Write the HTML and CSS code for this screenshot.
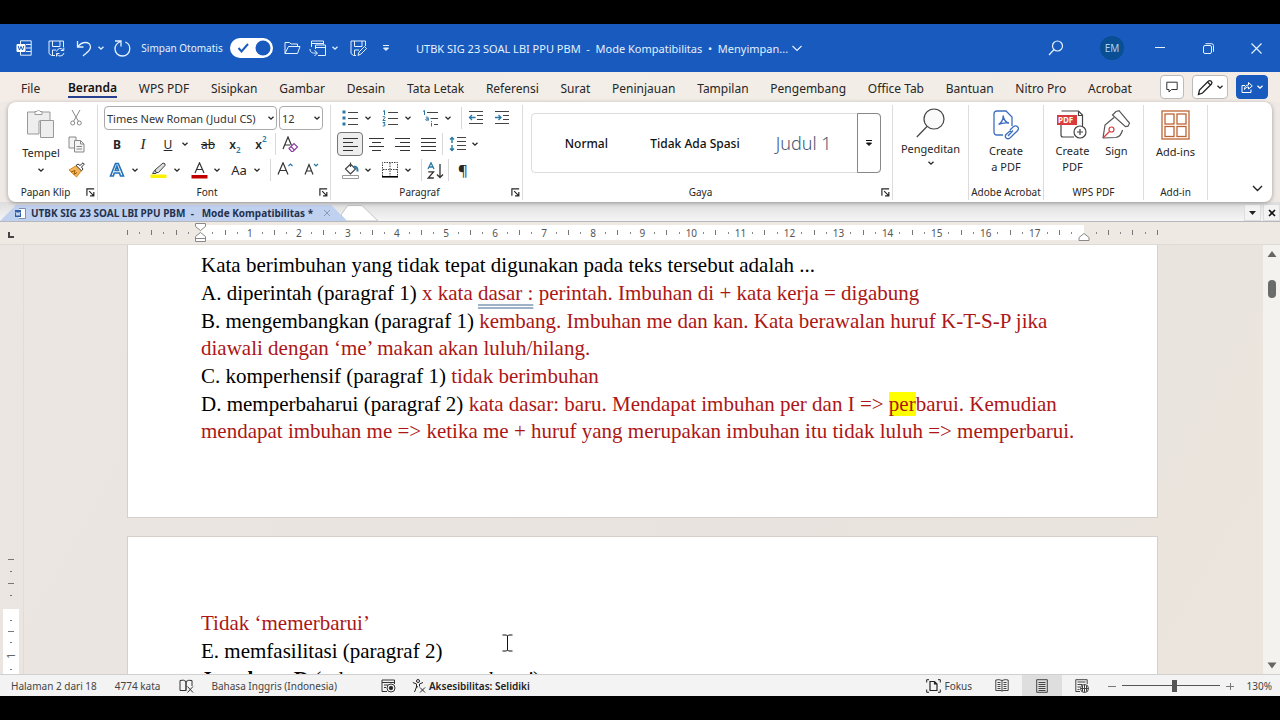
FILE: index.html
```html
<!DOCTYPE html>
<html lang="id">
<head>
<meta charset="utf-8">
<title>UTBK SIG 23 SOAL LBI PPU PBM</title>
<link rel="stylesheet" href="styles.css">
</head>
<body>
<svg class="defs" aria-hidden="true">
  <symbol id="chev" viewBox="0 0 8 8"><path d="M1.500 2.700 4 5.200 6.500 2.700" fill="none" stroke="currentColor" stroke-width="1.300"/></symbol>
  <symbol id="launch" viewBox="0 0 10 10"><path d="M1 8.500V1h8M3.500 3.500l5 5M8.700 4.500v4.200H4.500" fill="none" stroke="currentColor" stroke-width="1.300"/></symbol>
  <symbol id="more" viewBox="0 0 8 8"><path d="M1 1.500h6M1.500 4 4 6.500 6.500 4z" fill="currentColor" stroke="currentColor"/></symbol>
</svg>
<div class="app">
  <header class="titlebar">
    <div class="quick">
      <button class="c32" aria-label="Word"><svg width="16" height="16" viewBox="0 0 16 16" fill="none" stroke="currentColor"><path d="M4.500 4V.8h10.700v14.400H4.500V12M10 4.500h5M10 8h5M10 11.500h5"/><rect x=".5" y="4" width="9" height="8" rx="1" fill="#fff" stroke="none"/><path d="m2.200 6 1.300 4L5 6.500 6.500 10 7.800 6" stroke="#185abd"/></svg></button>
      <button class="c32" aria-label="Simpan"><svg width="17" height="17" viewBox="0 0 17 17" fill="none" stroke="currentColor"><path d="M7 15.500H3.500l-2.500-2V1h14.500v6M4.500 1v5.500h7.500V1M4.500 15v-5H8M8.500 11.500a4 4 0 0 1 7-1.500M15.800 7.500v3h-3M16 13a4 4 0 0 1-7 1.500M8.500 16.500v-3h3"/></svg></button>
      <span class="split"><button class="c24" aria-label="Urungkan"><svg width="16" height="17" viewBox="0 0 16 17" fill="none" stroke="currentColor" stroke-width="1.300"><path d="M1.500 1v6h6M1.800 6.700C4 4 6.500 2.500 9.500 2.500c3 0 5 2 5 4.500 0 3.500-3.500 5.500-7.500 9"/></svg></button><button class="c10" aria-label="Opsi urungkan"><svg width="8" height="8"><use href="#chev"/></svg></button></span>
      <button class="c24" aria-label="Ulangi"><svg width="17" height="17" viewBox="0 0 17 17" fill="none" stroke="currentColor" stroke-width="1.300"><path d="M1 1h6v5.500M6.500 1.500C3 3 1 5.500 1 9c0 4 3.300 7 7.300 7 4.200 0 7.500-3 7.500-7.200 0-3.300-2-5.800-4.500-6.800"/></svg></button>
      <label class="auto" for="autosave">Simpan Otomatis</label>
      <span class="switch"><input type="checkbox" id="autosave" checked><svg width="43" height="20" viewBox="0 0 43 20" fill="none"><circle cx="33" cy="10" r="7.500" fill="#185abd"/><path d="m8.500 10 3 3.500L18 6" stroke="#185abd" stroke-width="2"/></svg></span>
      <button class="c24" aria-label="Buka"><svg width="17" height="14" viewBox="0 0 17 14" fill="none" stroke="currentColor"><path d="M1 12.500V1.500h4.500L7 3h6.500v2.500M1 12.500l3.500-7H16l-2.500 7z"/></svg></button>
      <span class="split"><button class="c26" aria-label="Salin ke"><svg width="17" height="17" viewBox="0 0 17 17" fill="none" stroke="currentColor"><path d="M2.500 7V1h12v3.500M2.500 3.500h12M6.500 9v-4h10v10.500H9M6.500 7.500h10M1 9c0 3 1.500 4.500 7 4M5.500 10.500 8.500 13l-3 3"/></svg></button><button class="c10" aria-label="Opsi salin"><svg width="8" height="8"><use href="#chev"/></svg></button></span>
      <button class="c28" aria-label="Simpan sebagai"><svg width="17" height="17" viewBox="0 0 17 17" fill="none" stroke="currentColor"><path d="M6 15.500H3.500l-2.500-2V1h14.500v5M4.500 1v5.500h7.500V1M4.500 15v-5H9M8 15.500l1-3.500 5.500-5.500 2 2-5.500 5.500z"/></svg></button>
      <button class="c28" aria-label="Kustomisasi"><svg width="8" height="8"><use href="#more"/></svg></button>
    </div>
    <div class="doc-title">UTBK SIG 23 SOAL LBI PPU PBM &nbsp;- &nbsp;Mode Kompatibilitas &nbsp;•&nbsp; Menyimpan...<svg width="12" height="12" viewBox="0 0 12 12"><path d="m1.500 4 4.500 4.500L10.500 4" fill="none" stroke="currentColor" stroke-width="1.200"/></svg></div>
    <div class="window-tools">
      <button aria-label="Cari"><svg width="16" height="16" viewBox="0 0 16 16" fill="none" stroke="currentColor" stroke-width="1.200"><circle cx="9.500" cy="6" r="5"/><path d="m6 9.500-5 5.500"/></svg></button>
      <button class="avatar">EM</button>
      <button aria-label="Minimalkan"><svg width="10" height="10"><path d="M0 4.500h10" stroke="currentColor"/></svg></button>
      <button aria-label="Pulihkan"><svg width="11" height="11" viewBox="0 0 11 11" fill="none" stroke="currentColor"><rect x=".5" y="2.500" width="8" height="8" rx="1.500"/><path d="M2.500.7h6q2 0 2 2v6"/></svg></button>
      <button aria-label="Tutup"><svg width="11" height="11" viewBox="0 0 11 11"><path d="m.5.5 10 10m0-10-10 10" stroke="currentColor" stroke-width="1.200"/></svg></button>
    </div>
  </header>

  <div class="menu-row">
    <nav class="menu">
      <button class="file">File</button><button class="active">Beranda</button><button>WPS PDF</button><button>Sisipkan</button><button>Gambar</button><button>Desain</button><button>Tata Letak</button><button>Referensi</button><button>Surat</button><button>Peninjauan</button><button>Tampilan</button><button>Pengembang</button><button>Office Tab</button><button>Bantuan</button><button>Nitro Pro</button><button>Acrobat</button>
    </nav>
    <div class="menu-actions">
      <button class="boxed" aria-label="Komentar"><svg width="12" height="12" viewBox="0 0 12 12" fill="none" stroke="#333"><path d="M.8 1.200h10.400v7.300H5.500L3 11V8.500H.8z"/></svg></button>
      <button class="boxed wide" aria-label="Pengeditan"><svg width="17" height="17" viewBox="0 0 17 17" fill="none" stroke="#222" stroke-width="1.300"><path d="m1.500 15.500 1-4.500 9-9q1.300-1 2.700.3t.3 2.700l-9 9zM10.500 3l3.300 3.300"/></svg><svg width="8" height="8"><use href="#chev"/></svg></button>
      <button class="boxed share" aria-label="Bagikan"><svg width="12" height="12" viewBox="0 0 12 12" fill="none" stroke="#fff"><path d="M4 4.500H1v7h9V8.500M3.500 8.500c0-3 1.500-4.500 4-4.500V1.500L11.300 5 7.500 8V6c-2 0-3 .8-4 2.500z"/></svg><svg width="8" height="8"><use href="#chev"/></svg></button>
    </div>
  </div>

  <section class="ribbon">
    <div class="group clip">
      <div class="body">
        <button class="big"><svg width="30" height="32" viewBox="0 0 30 32" fill="#eee" stroke="#999"><path d="M9 4H1.500v22H13V13h11V4h-8"/><path d="M9 6.500V3.500h2q1.500-3 3 0h2v3z" fill="#fff"/><path d="M14.500 12.500h13v17h-13z"/></svg><span>Tempel</span><svg width="8" height="8"><use href="#chev"/></svg></button>
        <div class="stack">
          <button aria-label="Potong"><svg width="12" height="16" viewBox="0 0 12 16" fill="none" stroke="#888"><path d="m2 0 6.500 11.500M10 0 3.500 11.500"/><circle cx="2.700" cy="13" r="2"/><circle cx="9.300" cy="13" r="2"/></svg></button>
          <button aria-label="Salin"><svg width="17" height="17" viewBox="0 0 17 17" fill="#f4f4f4" stroke="#888"><path d="M6 12H1V1h7v3"/><path d="M6.500 4.500h6l3.500 3.500v8H6.500zM12.500 4.500V8H16M8.500 10.500H14M8.500 13H14"/></svg></button>
          <button aria-label="Pemformat"><svg width="17" height="16" viewBox="0 0 17 16"><path d="m8.500 3.500 5 5-5 6.500L1 8z" fill="#f5b55c" stroke="#d68920"/><path d="m3 10 4-1.500-1 4 3-2" stroke="#9a5b00" fill="none"/><path d="m8 3.500 2-1.500 2 1.500L15 .8l1.300 1.300-2.800 3L15 7l-1.500 1.800z" fill="#fff" stroke="#333"/></svg></button>
        </div>
      </div>
      <div class="caption"><span>Papan Klip</span><button aria-label="Opsi papan klip"><svg width="9" height="9"><use href="#launch"/></svg></button></div>
    </div>

    <div class="group font">
      <div class="rows">
        <div class="row selects">
          <span class="pick family"><select aria-label="Font"><option>Times New Roman (Judul CS)</option></select><svg width="8" height="8"><use href="#chev"/></svg></span>
          <span class="pick size"><select aria-label="Ukuran font"><option>12</option></select><svg width="8" height="8"><use href="#chev"/></svg></span>
        </div>
        <div class="row">
          <button class="c26 bold">B</button><button class="c26 ital">I</button><span class="split"><button class="c24 under">U</button><button class="c10" aria-label="Opsi garis bawah"><svg width="8" height="8"><use href="#chev"/></svg></button></span><button class="c28 strike">ab</button><button class="c26 semi">x<sub>2</sub></button><button class="c26 semi">x<sup>2</sup></button><i class="sep"></i>
          <button class="c26" aria-label="Hapus format"><svg width="17" height="17" viewBox="0 0 17 17" fill="none" stroke="#333" stroke-width="1.200"><path d="M1 13 6 1l3.500 8.500M3 9h5"/><path d="m7 12.500 5-5 3.500 3.500-4.500 4.500H9.500zM9 10.500l3.800 3.800" stroke="#8b3fa0"/></svg></button>
        </div>
        <div class="row">
          <span class="split"><button class="c26" aria-label="Efek teks"><svg width="16" height="16" viewBox="0 0 16 16"><path d="M1.500 14 6.500 1.500h2.800L14.500 14h-3l-1-3H5.300l-1 3zM6.200 8.500h3.300L7.900 4z" fill="#fff" stroke="#2472b8" stroke-width="1.600"/></svg></button><button class="c10" aria-label="Opsi efek"><svg width="8" height="8"><use href="#chev"/></svg></button></span>
          <span class="split"><button class="c28" aria-label="Warna sorotan"><svg width="17" height="17" viewBox="0 0 17 17"><path d="M.5 12.500h16V16H.5z" fill="#fff200"/><path d="m5 8 8-7q3 .5 2 2.500l-6.500 7H6zM5 8l-2.500 3.500H6l.8-1" fill="#ddd" stroke="#444"/></svg></button><button class="c10" aria-label="Opsi sorotan"><svg width="8" height="8"><use href="#chev"/></svg></button></span>
          <span class="split"><button class="c26" aria-label="Warna font"><svg width="17" height="17" viewBox="0 0 17 17"><path d="M.5 13h16v3.500H.5z" fill="#c00000"/><path d="M4 11 8.500.8 13 11M5.500 7.500h6" fill="none" stroke="#333" stroke-width="1.200"/></svg></button><button class="c10" aria-label="Opsi warna"><svg width="8" height="8"><use href="#chev"/></svg></button></span>
          <span class="split"><button class="c26 case">Aa</button><button class="c10" aria-label="Opsi huruf"><svg width="8" height="8"><use href="#chev"/></svg></button></span><i class="sep"></i>
          <button class="c26" aria-label="Perbesar font"><svg width="17" height="16" viewBox="0 0 17 16" fill="none" stroke="#333" stroke-width="1.200"><path d="M1 12.500 6 .8l5 11.700M2.800 8.500h6.400"/><path d="m11.500 4 2-2 2 2" stroke="#2878a8"/></svg></button>
          <button class="c26" aria-label="Perkecil font"><svg width="17" height="16" viewBox="0 0 17 16" fill="none" stroke="#333" stroke-width="1.200"><path d="M2 12.500 6 2.500l4 10M3.500 9h5"/><path d="m11 2 2 2 2-2" stroke="#2878a8"/></svg></button>
        </div>
      </div>
      <div class="caption"><span>Font</span><button aria-label="Opsi font"><svg width="9" height="9"><use href="#launch"/></svg></button></div>
    </div>

    <div class="group para">
      <div class="rows">
        <div class="row">
          <span class="split"><button class="c26" aria-label="Poin"><svg width="17" height="16" viewBox="0 0 17 16"><path d="M.5.5h3v3h-3zM.5 6.500h3v3h-3zM.5 12.500h3v3h-3z" fill="#2878a8"/><path d="M6 2.500h10M6 8.500h10M6 14.500h10" stroke="#444"/></svg></button><button class="c10" aria-label="Opsi poin"><svg width="8" height="8"><use href="#chev"/></svg></button></span>
          <span class="split"><button class="c26" aria-label="Penomoran"><svg width="17" height="17" viewBox="0 0 17 17" fill="none"><path d="M6 2.500h10M6 8.500h10M6 14.500h10" stroke="#444"/><path d="M1 1.500 2.500.5V5M.7 6.800q2.600-1 2.300.7L.8 10.500H3.500M.7 12.500H3L1.800 14q2 0 1.200 1.500-.8 1-2.300.3" stroke="#2878a8"/></svg></button><button class="c10" aria-label="Opsi penomoran"><svg width="8" height="8"><use href="#chev"/></svg></button></span>
          <span class="split"><button class="c26" aria-label="Daftar bertingkat"><svg width="17" height="17" viewBox="0 0 17 17" fill="none"><path d="M5 2.500h11M8.500 8.500H16M12 14.500h4" stroke="#444"/><path d="M1 1.500 2.500.5V5M3.800 7.200q2.500-.8 2.500 1v2.500M6.300 8.700q-2.800-.3-2.600 1.200.8 1.200 2.600-.3M9.500 12.800v3.700M9.500 11v1" stroke="#2878a8"/></svg></button><button class="c10" aria-label="Opsi bertingkat"><svg width="8" height="8"><use href="#chev"/></svg></button></span><i class="sep"></i>
          <button class="c26" aria-label="Kurangi indentasi"><svg width="16" height="16" viewBox="0 0 16 16" fill="none" stroke="#444"><path d="M1 1.500h14M9 5.500h6M9 9.500h6M1 13.500h14"/><path d="M7.500 7.500H1.500M4 5 1.500 7.500 4 10" stroke="#2878a8" stroke-width="1.300"/></svg></button>
          <button class="c26" aria-label="Tambah indentasi"><svg width="16" height="16" viewBox="0 0 16 16" fill="none" stroke="#444"><path d="M1 1.500h14M9 5.500h6M9 9.500h6M1 13.500h14"/><path d="M1 7.500h6M4.500 5 7 7.500 4.500 10" stroke="#2878a8" stroke-width="1.300"/></svg></button>
        </div>
        <div class="row">
          <button class="c26 pressed" aria-label="Rata kiri"><svg width="15" height="15" stroke="#333"><path d="M0 1.500h15M0 5.500h10M0 9.500h15M0 13.500h10"/></svg></button>
          <button class="c26" aria-label="Rata tengah"><svg width="15" height="15" stroke="#333"><path d="M0 1.500h15M3 5.500h9M0 9.500h15M3 13.500h9"/></svg></button>
          <button class="c26" aria-label="Rata kanan"><svg width="15" height="15" stroke="#333"><path d="M0 1.500h15M5 5.500h10M0 9.500h15M5 13.500h10"/></svg></button>
          <button class="c26" aria-label="Rata penuh"><svg width="15" height="15" stroke="#333"><path d="M0 1.500h15M0 5.500h15M0 9.500h15M0 13.500h15"/></svg></button><i class="sep"></i>
          <span class="split"><button class="c26" aria-label="Spasi baris"><svg width="17" height="16" viewBox="0 0 17 16" fill="none" stroke="#444"><path d="M8 1.500h9M8 5.500h9M8 9.500h9M8 13.500h9"/><path d="M3 1.500V7M1 3.500l2-2 2 2M3 9v5.500M1 12.500l2 2 2-2" stroke="#2878a8" stroke-width="1.400"/></svg></button><button class="c10" aria-label="Opsi spasi"><svg width="8" height="8"><use href="#chev"/></svg></button></span>
        </div>
        <div class="row">
          <span class="split"><button class="c26" aria-label="Bayangan"><svg width="17" height="17" viewBox="0 0 17 17" fill="none" stroke="#444"><path d="M.5 13.500h16v3H.5z" stroke="#999"/><path d="m3.500 7 5-5 5 5-5 5zM8.500 5V.5" stroke-width="1.200"/><path d="M12 4.500q4 0 3.500 5" stroke="#2878a8" stroke-width="2"/></svg></button><button class="c10" aria-label="Opsi bayangan"><svg width="8" height="8"><use href="#chev"/></svg></button></span>
          <span class="split"><button class="c26" aria-label="Batas"><svg width="16" height="16" viewBox="0 0 16 16" fill="none" stroke="#444"><path d="M.5 14V.5h15V14M8 1v13M1 7.500h14" stroke-dasharray="1.500 1"/><path d="M0 14.800h16" stroke="#000" stroke-width="1.600"/></svg></button><button class="c10" aria-label="Opsi batas"><svg width="8" height="8"><use href="#chev"/></svg></button></span><i class="sep"></i>
          <button class="c24" aria-label="Urutkan"><svg width="17" height="17" viewBox="0 0 17 17" fill="none" stroke="#333" stroke-width="1.300"><path d="M1 7 4 .8 7 7M2 5h4" stroke="#2878a8"/><path d="M1.300 9.800H6.500L1.200 16h5.600M13 2v13.500M10 12.500l3 3 3-3"/></svg></button><i class="sep"></i>
          <button class="c26 pilcrow">¶</button>
        </div>
      </div>
      <div class="caption"><span>Paragraf</span><button aria-label="Opsi paragraf"><svg width="9" height="9"><use href="#launch"/></svg></button></div>
    </div>

    <div class="group styles">
      <div class="gallery">
        <button>Normal</button><button>Tidak Ada Spasi</button><button class="heading">Judul 1</button>
        <button class="expand" aria-label="Gaya lainnya"><svg width="8" height="8"><use href="#more"/></svg></button>
      </div>
      <div class="caption"><span>Gaya</span><button aria-label="Opsi gaya"><svg width="9" height="9"><use href="#launch"/></svg></button></div>
    </div>

    <div class="group edit">
      <button class="big"><svg width="30" height="31" viewBox="0 0 30 31" fill="#fafafa" stroke="#444" stroke-width="1.200"><circle cx="18" cy="11" r="10"/><path d="M11 18.500.8 29"/></svg><span>Pengeditan</span><svg width="8" height="8"><use href="#chev"/></svg></button>
    </div>

    <div class="group acro">
      <div class="body"><button class="big"><svg width="26" height="30" viewBox="0 0 26 30" fill="none" stroke="#3d6dc0" stroke-width="1.300"><path d="M10 25H4q-3 0-3-3V4q0-3 3-3h9l6 6v9M5.500 14.500C9 13 10.500 8 10 5.500c1 4.500 3 7.500 6 7.500-4-.5-7.500 0-10.500 1.500"/><path d="m17 20 3.500-3.500q2-1.500 4 .2t0 4L21 24M20 20.500 15 26M18.500 22l-1.500-1-4 3.500q-1.500 2 .2 3.500t3.800 0L21 24"/></svg><span>Create<br>a PDF</span></button></div>
      <div class="caption"><span>Adobe Acrobat</span></div>
    </div>

    <div class="group wps">
      <div class="body">
        <button class="big"><svg width="30" height="30" viewBox="0 0 30 30" fill="none" stroke="#444" stroke-width="1.200"><path d="M4.500 1h17l4 4v12M17 27H6q-2 0-2-2V14M21.500 1v4.500h4"/><rect x="0" y="5" width="20" height="10" fill="#d83b3b" stroke="none"/><text x="1" y="13" class="pdf">PDF</text><circle cx="23" cy="22" r="6" fill="#fff"/><path d="M23 19v6M20 22h6"/></svg><span>Create<br>PDF</span></button>
        <button class="big"><svg width="30" height="30" viewBox="0 0 30 30" fill="none" stroke="#555" stroke-width="1.200"><path d="M2 28 4 15l9-7.500M2 28l13-.5q5-1 6.500-7.500M15 1.500l3-.8 10.500 12.500-1.500 3-2.500.5L11.500 5z"/><circle cx="10.500" cy="19.500" r="2.500" stroke="#d83b3b"/><path d="m2 28 6.500-6.500" stroke="#d83b3b"/></svg><span>Sign</span></button>
      </div>
      <div class="caption"><span>WPS PDF</span></div>
    </div>

    <div class="group addin">
      <div class="body"><button class="big"><svg width="29" height="30" viewBox="0 0 29 30" fill="none" stroke="#bd6433" stroke-width="1.300"><rect x="1" y="1" width="27" height="28"/><rect x="4" y="4" width="9" height="10"/><rect x="16" y="4" width="9" height="10"/><rect x="4" y="16.500" width="9" height="10"/><rect x="16" y="16.500" width="9" height="10"/></svg><span>Add-ins</span></button></div>
      <div class="caption"><span>Add-in</span></div>
    </div>
    <div class="tail"><button aria-label="Ciutkan pita"><svg width="11" height="11" viewBox="0 0 11 11"><path d="m1 3 4.500 4.500L10 3" fill="none" stroke="#222" stroke-width="1.400"/></svg></button></div>
  </section>

  <div class="doc-tabs">
    <div class="doc-tab"><svg width="11" height="11" viewBox="0 0 11 11"><path d="M4 .5h6.500v10H4" fill="#fff" stroke="#7d90b4"/><path d="M0 2h6v7H0z" fill="#2f5da8"/><path d="m1 4 1 3.500 1-3 1 3L5 4" fill="none" stroke="#fff" stroke-width=".8"/></svg><span>UTBK SIG 23 SOAL LBI PPU PBM &nbsp;- &nbsp;&nbsp;Mode Kompatibilitas *</span><button aria-label="Tutup tab"><svg width="8" height="8"><path d="m1 1 6 6m0-6L1 7" stroke="#8798ba"/></svg></button></div>
    <button class="new-tab" aria-label="Tab baru"><svg width="38" height="16" viewBox="0 0 38 16"><path d="m0 10 6-8.500q1-1 2-1h11q2 0 3 1L37 16H5z" fill="#fff" stroke="#c5c5c5"/></svg></button>
    <div class="tab-tools"><button aria-label="Daftar tab"><svg width="7" height="4"><path d="M0 0h7L3.500 4z" fill="#222"/></svg></button><button aria-label="Tutup dokumen"><svg width="8" height="8"><path d="m1 1 6 6m0-6L1 7" stroke="#111" stroke-width="1.600"/></svg></button></div>
  </div>

  <div class="ruler">
    <div class="corner"><svg width="6" height="6"><path d="M1 0v5h5" fill="none" stroke="#444" stroke-width="2"/></svg></div>
    <div class="scale" id="scale"></div>
  </div>

  <main class="workspace">
    <div class="v-ruler"><div class="v-top"><i></i><b></b><i></i><b></b></div><div class="v-page"><b></b><i></i><b></b><span>1</span><b></b></div></div>
    <div class="pages">
      <article class="page first">
        <p>Kata berimbuhan yang tidak tepat digunakan pada teks tersebut adalah ...</p>
        <p>A. diperintah (paragraf 1) <span class="red">x kata <span class="flag">dasar :</span> perintah. Imbuhan di + kata kerja = digabung</span></p>
        <p>B. mengembangkan (paragraf 1) <span class="red">kembang. Imbuhan me dan kan. Kata berawalan huruf K-T-S-P jika diawali dengan ‘me’ makan akan luluh/hilang.</span></p>
        <p>C. komperhensif (paragraf 1) <span class="red">tidak berimbuhan</span></p>
        <p>D. memperbaharui (paragraf 2) <span class="red">kata dasar: baru. Mendapat imbuhan per dan I =&gt; <mark>per</mark>barui. Kemudian mendapat imbuhan me =&gt; ketika me + huruf yang merupakan imbuhan itu tidak luluh =&gt; memperbarui.</span></p>
      </article>
      <article class="page second">
        <p class="red">Tidak ‘memerbarui’</p>
        <p>E. memfasilitasi (paragraf 2)</p>
        <p><strong>Jawaban: D</strong> (seharusnya <em>memperbarui</em>)</p>
      </article>
      <svg class="caret" width="11" height="18" viewBox="0 0 11 18" fill="none" stroke="#111"><path d="M.5 1h4l1 1 1-1h4M5.500 2v14M.5 17h4l1-1 1 1h4"/></svg>
    </div>
    <div class="scrollbar"><svg width="10" height="7"><path d="M5 0 9.500 6h-9z" fill="#666"/></svg><div class="thumb"></div><svg class="down" width="10" height="7"><path d="M.5.500h9L5 6.500z" fill="#666"/></svg></div>
  </main>

  <footer class="status">
    <span>Halaman 2 dari 18</span><span class="words">4774 kata</span>
    <button class="proof" aria-label="Pemeriksaan"><svg width="15" height="14" viewBox="0 0 15 14" fill="none" stroke="#333"><path d="M7 2.500Q4.500.3 1 1.500v10h6zM7 2.500q2.500-2 6-1V7M7 11.500V2.500M8.500 7.500l5.500 6m0-6-5.500 6"/></svg></button>
    <span class="lang">Bahasa Inggris (Indonesia)</span>
    <button class="macro" aria-label="Makro"><svg width="15" height="14" viewBox="0 0 15 14" fill="none" stroke="#333"><path d="M6 12.500H1V1h12.500v4M1 3.500h12.500M3 6h4M3 8.500h2"/><circle cx="10" cy="9" r="4" fill="#fff"/><circle cx="10" cy="9" r="1.800" fill="#222"/></svg></button>
    <button class="access"><svg width="14" height="14" viewBox="0 0 14 14" fill="none" stroke="#222"><circle cx="6" cy="2" r="1.500"/><path d="M.8 3.500 4.500 5v3L2.500 13M11 3.500 7.500 5v2.500M4.500 8.500 6 7.500M8 8.500l5 5m0-5-5 5"/></svg>Aksesibilitas: Selidiki</button>
    <div class="views">
      <button class="focus"><svg width="15" height="14" viewBox="0 0 15 14" fill="none" stroke="#222"><path d="M.7 3.500V.7H3M12 .7h2.300v2.800M.7 10.500v2.800H3M12 13.300h2.300v-2.800"/><path d="M4 2.500h4.500L11 5v6.500H4zM8.500 2.500V5H11" stroke-width="1.200"/></svg>Fokus</button>
      <button class="view" aria-label="Mode baca"><svg width="14" height="13" viewBox="0 0 14 13" fill="none" stroke="#444"><path d="M7 1.500Q4 0 .8 1v10.500H6l1 .8 1-.8h5.200V1Q10 0 7 1.500zM7 1.500V12M2.500 3.500h3M2.500 5.500h3M2.500 7.500h3M2.500 9.500h3M8.500 3.500h3M8.500 5.500h3M8.500 7.500h3M8.500 9.500h3"/></svg></button>
      <button class="view on" aria-label="Tata letak cetak"><svg width="12" height="14" viewBox="0 0 12 14" fill="none" stroke="#444"><path d="M.7.7h10.600v12.600H.7zM2.500 3.500h7M2.500 5.500h7M2.500 7.500h7M2.500 9.500h7M2.500 11.500h7"/></svg></button>
      <button class="view" aria-label="Tata letak web"><svg width="14" height="14" viewBox="0 0 14 14" fill="none" stroke="#444"><path d="M5 12.500H.8V.7h11.400V5M2.500 3h8M2.500 5.500h5M2.500 8h3M2.500 10.500h2"/><circle cx="9.500" cy="9.500" r="4" fill="#fff"/><path d="M5.500 9.500h8M9.500 5.500v8M7.500 6.500v6M11.500 6.500v6"/></svg></button>
      <button class="step" aria-label="Perkecil"><svg width="8" height="8"><path d="M0 4.500h8" stroke="#777"/></svg></button>
      <input type="range" aria-label="Zoom" min="0" max="100" value="54">
      <button class="step" aria-label="Perbesar"><svg width="8" height="8"><path d="M0 4.500h8M4.500 1v7" stroke="#777"/></svg></button>
      <span class="percent">130%</span>
    </div>
  </footer>
</div>
<script src="ruler.js"></script>
</body>
</html>
```
FILE: styles.css
```css
* { box-sizing: border-box; }
body { margin: 0; background: #000; font-family: "Noto Sans", "Open Sans", sans-serif; font-size: 12px; color: #262626; }
button { border: 0; padding: 0; margin: 0; background: none; color: inherit; font: inherit; display: flex; align-items: center; justify-content: center; white-space: nowrap; }
svg { display: block; flex: none; }
.defs { position: absolute; width: 0; height: 0; }
.app { display: flex; flex-direction: column; height: 100vh; border: solid #000; border-width: 24px 0; background: #efe9e5; }

.titlebar { display: flex; align-items: center; flex: none; height: 48px; background: #185abd; color: #e4f1ff; }
.quick { display: flex; align-items: center; padding-left: 8px; }
.c10 { width: 10px; } .c24 { width: 24px; } .c26 { width: 26px; } .c28 { width: 28px; } .c32 { width: 32px; }
.split { display: flex; margin-right: 4px; }
.auto { width: 96px; text-align: center; font-size: 10px; white-space: nowrap; }
.switch { position: relative; width: 43px; height: 20px; margin-right: 7px; }
.switch input { appearance: none; width: 43px; height: 20px; margin: 0; border-radius: 10px; background: #fff; display: block; }
.switch svg { position: absolute; inset: 0; pointer-events: none; }
.doc-title { display: flex; align-items: center; gap: 3px; margin-left: 16px; font-size: 11px; white-space: nowrap; }
.window-tools { display: flex; align-items: center; margin-left: auto; }
.window-tools button { width: 48px; height: 24px; }
.window-tools .avatar { width: 24px; border-radius: 50%; background: #0a4f93; margin: 0 24px 0 20px; font-size: 10px; color: #a9d4ec; }
.window-tools .avatar + button { margin-left: -12px; }

.menu-row { display: flex; flex: none; align-items: center; height: 30px; padding: 0 12px 0 21px; background: linear-gradient(90deg, #f4ece7, #f2eee7 60%, #f3ebe6); }
.menu { flex: 1; display: flex; justify-content: space-between; padding-right: 28px; }
.menu button { height: 20px; margin-top: 2px; }
.menu .file { margin-right: 6px; }
.menu .active { font-weight: 600; border-bottom: 2px solid #24408e; color: #111; }
.menu-actions { display: flex; gap: 8px; }
.boxed { width: 24px; height: 24px; border: 1px solid #bbb; border-radius: 4px; background: #fff; }
.wide { width: 36px; gap: 2px; }
.share { width: 32px; gap: 3px; border-color: #185abd; background: #185abd; color: #fff; }

.ribbon { display: flex; flex: none; height: 100px; margin: 0 8px; background: #fff; border-radius: 8px; position: relative; z-index: 1; box-shadow: 0 1px 4px #0005; }
.group { display: flex; flex-direction: column; margin: 3px 0 2px; border-right: 1px solid #dcdcdc; }
.clip { width: 90px; } .font { width: 233px; } .para { width: 192px; } .styles { flex: 1; } .edit { width: 76px; } .acro { width: 75px; } .wps { width: 100px; } .addin { width: 64px; }
.tail { width: 64px; display: flex; align-items: flex-end; justify-content: flex-end; padding: 0 9px 8px 0; }
.body { display: flex; flex: 1; justify-content: center; }
.big { flex-direction: column; justify-content: flex-start; line-height: 16px; font-size: 11px; gap: 4px; }
.clip .body { justify-content: flex-start; padding-left: 13px; }
.clip .big { width: 40px; gap: 5px; padding-top: 3px; }
.stack { display: flex; flex-direction: column; padding-left: 2px; }
.stack button { width: 26px; height: 26px; }
.caption { display: flex; align-items: center; height: 16px; font-size: 10px; margin-top: auto; white-space: nowrap; }
.caption span { flex: 1; text-align: center; }
.caption button { width: 14px; height: 14px; }
.acro .body, .wps .body, .addin .body { padding-top: 5px; }
.acro .big, .wps .big { gap: 3px; }
.wps .body { gap: 12px; }
.edit .big { padding-top: 3px; gap: 2px; }

.rows { padding: 0 0 0 6px; }
.row { display: flex; align-items: center; height: 26px; }
.row button { height: 24px; }
.sep { width: 1px; height: 22px; background: #d8d8d8; margin: 0 1px; }
.split + .sep { margin-left: 4px; }
.selects { gap: 2px; }
.pick { position: relative; height: 24px; }
.family { width: 173px; } .size { width: 44px; }
.pick select { appearance: none; width: 100%; height: 24px; border: 1px solid #aaa; border-radius: 4px; background: #fff; padding: 0 2px; font: inherit; font-size: 11px; color: #333; }
.pick svg { position: absolute; right: 2px; top: 8px; pointer-events: none; }
.bold { font-weight: 700; font-size: 12px; }
.ital { font: italic 15px "Liberation Serif", serif; }
.under { text-decoration: underline; }
.strike { text-decoration: line-through; }
.semi { font-weight: 600; font-size: 12px; }
.semi sub, .semi sup { font-size: 8px; line-height: 8px; color: #2878a8; }
.semi sub { align-self: flex-end; padding-bottom: 2px; }
.semi sup { align-self: flex-start; padding-top: 3px; }
.case { font-size: 13px; }
.pdf { font: 700 8px "Noto Sans", sans-serif; fill: #fff; stroke: none; }
.pilcrow { font-size: 15px; }
.para .pressed { border: 1px solid #777; border-radius: 4px; background: #eee; }

.gallery { display: flex; height: 60px; margin: 8px 11px 0 8px; border: 1px solid #ddd; border-radius: 4px; }
.gallery button { flex: 1; font-size: 12px; font-weight: 500; color: #111; }
.gallery .heading { font-size: 18px; font-weight: 300; color: #4a5872; }
.gallery .expand { flex: none; width: 24px; margin: -1px; border: 1px solid #888; border-radius: 0 4px 4px 0; }

.doc-tabs { display: flex; flex: none; align-items: flex-end; height: 20px; background: linear-gradient(#ddd, #f5f5f5); border-bottom: 1px solid #b5b9bd; }
.doc-tab { display: flex; align-items: center; gap: 5px; height: 16px; padding: 0 16px 0 15px; background: #c0d1f0; clip-path: polygon(0 100%, 16px 0, calc(100% - 16px) 0, 100% 100%); font-size: 10px; font-weight: 700; white-space: nowrap; color: #24324d; }
.doc-tab button { margin-left: 5px; }
.new-tab { margin-left: -6px; }
.tab-tools { display: flex; margin-left: auto; gap: 2px; }
.tab-tools button { width: 17px; height: 17px; background: #f3f3f3; border: 1px solid #ddd; }

.ruler { display: flex; flex: none; height: 23px; padding-right: 116px; background: #efe9e4; border-bottom: 1px solid #dedad5; }
.corner { width: 121px; padding: 10px 0 0 8px; }
.scale { flex: 1; display: flex; align-items: center; height: 15px; margin-top: 3px; font-size: 10px; color: #555; background: linear-gradient(90deg, transparent 7.65%, #fff 7.65%, #fff 92.35%, transparent 92.35%); }
.scale span { flex: 1; width: 0; display: flex; justify-content: center; }
.tick { width: 1px; height: 5px; background: #777; }
.dot { width: 1px; height: 2px; background: #888; }

.workspace { display: flex; flex: 1; min-height: 0; background: linear-gradient(120deg, #ebe6e2, #e8e3de 60%, #ebe5dd); }
.v-ruler { display: flex; flex-direction: column; width: 24px; border-right: 1px solid #e1dcd7; padding-left: 3px; }
.v-ruler i { width: 6px; height: 1px; background: #777; }
.v-ruler b { width: 2px; height: 1px; background: #777; }
.v-top, .v-page { display: flex; flex-direction: column; align-items: center; width: 16px; gap: 11px; }
.v-top { flex: 1; justify-content: flex-end; padding-bottom: 13px; }
.v-page { height: 65px; background: #fff; padding-top: 11px; font-size: 10px; color: #444; gap: 10px; }
.v-page span { writing-mode: vertical-rl; transform: rotate(180deg); line-height: 12px; }
.pages { flex: 1; position: relative; overflow: hidden; padding: 0 105px 0 103px; }
.page { background: #fff; border: 1px solid #d5d0cb; font: 21px/27px "Liberation Serif", "Times New Roman", serif; color: #000; padding: 0 73px; }
.page p { margin: 0 0 1px; }
.first { padding-top: 7px; padding-bottom: 71px; border-top: 0; margin-bottom: 18px; }
.second { padding-top: 73px; height: 400px; }
.red { color: #ac1616; }
.flag { text-decoration: underline double #9fb2c8; text-underline-offset: 4px; }
mark { background: #ffff00; color: inherit; }
.caret { position: absolute; left: 478px; top: 389px; }
.scrollbar { display: flex; flex-direction: column; align-items: center; width: 17px; background: #f4f2ef; padding: 6px 0 5px; }
.thumb { width: 8px; height: 18px; border-radius: 4px; background: #6b6b6b; margin-top: 22px; }
.down { margin-top: auto; }

.status { display: flex; align-items: center; flex: none; height: 22px; padding: 0 8px 0 11px; background: #f3f3f3; border-top: 1px solid #d0d0d0; font-size: 10px; color: #444; white-space: nowrap; }
.words { margin-left: 18px; }
.proof { margin: 0 17px 0 19px; }
.lang { margin-right: 44px; }
.macro { margin-right: 16px; }
.access { gap: 3px; font-weight: 600; color: #222; }
.views { display: flex; align-items: center; margin-left: auto; height: 21px; }
.focus { gap: 3px; margin-right: 10px; }
.view { width: 40px; height: 21px; }
.on { background: #dedede; }
.step { width: 10px; margin: 0 5px; }
.views input { appearance: none; width: 98px; height: 12px; margin: 0; background: linear-gradient(#555, #555) center / 100% 1px no-repeat; }
.views input::-webkit-slider-thumb { appearance: none; width: 5px; height: 12px; background: #555; }
.percent { width: 32px; text-align: right; }
```
FILE: ruler.js
```js
// Quarter-centimetre marks; zero sits at the left text margin.
const scale = document.getElementById('scale');
for (let n = -6; n <= 78; n++) {
  const cell = document.createElement('span');
  if (n > 0 && n < 72 && n % 4 === 0) {
    cell.textContent = n / 4;
  } else if (n === 0 || n === 72) {
    cell.innerHTML = n === 0
      ? '<svg width="11" height="19" viewBox="0 0 11 19" fill="#fff" stroke="#888"><path d="M.5.5h10v3l-5 4-5-4zM5.500 9.500l5 4v5H.5v-5zM.5 15.500h10"/></svg>'
      : '<svg width="12" height="19" viewBox="0 0 12 19" fill="#fff" stroke="#888"><path d="M6 10.500l5 4v3H1v-3z"/></svg>';
  } else {
    const mark = document.createElement('i');
    mark.className = n % 2 === 0 ? 'tick' : 'dot';
    cell.append(mark);
  }
  scale.append(cell);
}
```
